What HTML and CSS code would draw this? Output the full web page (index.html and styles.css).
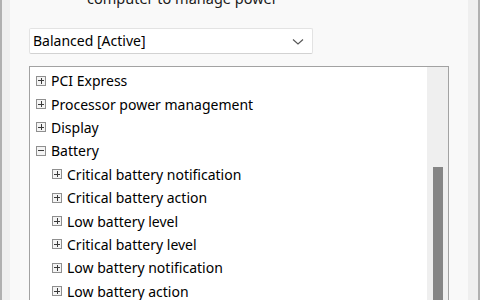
FILE: index.html
```html
<!DOCTYPE html>
<html lang="en">
<head>
    <meta charset="UTF-8">
    <title>Power Options - Advanced settings</title>
    <link rel="stylesheet" href="styles.css">
</head>
<body>
    <div class="window">
        <div class="panel">
            <p class="intro">computer to manage power</p>

            <!-- Plan selector -->
            <div class="plan-select">
                <span>Balanced [Active]</span>
                <svg class="chevron" width="12" height="8" viewBox="0 0 12 8">
                    <path d="M1 1.5 L6 6 L11 1.5" fill="none" stroke="#555" stroke-width="1.1"/>
                </svg>
            </div>

            <!-- Settings tree -->
            <div class="tree-box">
                <ul class="tree">
                    <li class="node"><span class="box plus"></span>PCI Express</li>
                    <li class="node"><span class="box plus"></span>Processor power management</li>
                    <li class="node"><span class="box plus"></span>Display</li>
                    <li class="node"><span class="box minus"></span>Battery</li>
                    <li class="node child"><span class="box plus"></span>Critical battery notification</li>
                    <li class="node child"><span class="box plus"></span>Critical battery action</li>
                    <li class="node child"><span class="box plus"></span>Low battery level</li>
                    <li class="node child"><span class="box plus"></span>Critical battery level</li>
                    <li class="node child"><span class="box plus"></span>Low battery notification</li>
                    <li class="node child"><span class="box plus"></span>Low battery action</li>
                </ul>
                <div class="scrollbar">
                    <div class="thumb"></div>
                </div>
            </div>
        </div>
    </div>
</body>
</html>
```

FILE: styles.css
```css
body {
    margin: 0;
    padding: 0;
    font-family: 'Noto Sans', 'Open Sans', sans-serif;
    font-size: 14px;
    color: #000;
    background-color: #efefef;
    overflow: hidden;
}

.window {
    height: 300px;
    border-left: 2px solid #b0b0b0;
    border-right: 2px solid #b0b0b0;
    padding-left: 8px;
    padding-right: 10px;
}

.panel {
    background-color: #f9f9f9;
    height: 300px;
    padding-left: 19px;
    overflow: hidden;
}

.intro {
    margin: -12px 0 0 58px;
    line-height: 20px;
    font-size: 14.5px;
    color: #1a1a1a;
}

.plan-select {
    height: 24px;
    width: 271px;
    margin-top: 20px;
    background-color: #fff;
    border: 1px solid #e3e3e3;
    border-bottom-color: #d2d2d2;
    border-radius: 2px;
    display: flex;
    align-items: center;
    justify-content: space-between;
    padding: 0 8px 0 3px;
}

.plan-select span {
    line-height: 24px;
}

.chevron {
    margin-top: 1px;
}

.tree-box {
    margin-top: 12px;
    width: 418px;
    height: 300px;
    background-color: #fff;
    border: 1px solid #a2a2a2;
    display: flex;
}

.tree {
    list-style: none;
    margin: 0;
    padding: 2px 0 0 6px;
    flex: 1;
}

.node {
    height: 23.4px;
    display: flex;
    align-items: center;
    white-space: nowrap;
}

.node.child {
    padding-left: 16px;
}

.box {
    width: 8px;
    height: 8px;
    border: 1px solid #8f8f8f;
    background-color: #f4f4f4;
    margin-right: 5px;
    position: relative;
    flex-shrink: 0;
}

.box::before {
    content: "";
    position: absolute;
    left: 1px;
    top: 3.5px;
    width: 6px;
    height: 1px;
    background-color: #3a3a3a;
}

.plus::after {
    content: "";
    position: absolute;
    left: 3.5px;
    top: 1px;
    width: 1px;
    height: 6px;
    background-color: #3a3a3a;
}

.scrollbar {
    width: 21px;
    background-color: #efefef;
    display: flex;
    justify-content: center;
    padding-top: 100px;
}

.thumb {
    width: 10px;
    height: 200px;
    background-color: #858585;
}
```
